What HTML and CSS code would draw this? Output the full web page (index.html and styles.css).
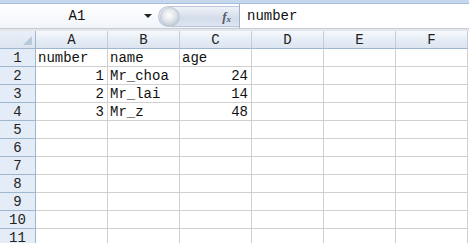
FILE: index.html
```html
<!DOCTYPE html>
<html>
<head>
	<link rel="stylesheet" href="styles.css">
</head>
<body>
<div class="strip"></div>
<div class="fbar">
	<div class="namebox"><span class="ref">A1</span><span class="arrow"></span></div>
	<div class="fxbtn"><span class="knob"></span><span class="fx">f<sub>x</sub></span></div>
	<div class="input">number</div>
</div>
<div class="gap"></div>
<div class="sheet">
	<div class="corner"><span class="tri"></span></div>
	<div class="colhead">A</div>
	<div class="colhead">B</div>
	<div class="colhead">C</div>
	<div class="colhead">D</div>
	<div class="colhead">E</div>
	<div class="colhead">F</div>

	<div class="rowhead">1</div>
	<div class="cell">number</div><div class="cell">name</div><div class="cell">age</div><div class="cell"></div><div class="cell"></div><div class="cell"></div>
	<div class="rowhead">2</div>
	<div class="cell num">1</div><div class="cell">Mr_choa</div><div class="cell num">24</div><div class="cell"></div><div class="cell"></div><div class="cell"></div>
	<div class="rowhead">3</div>
	<div class="cell num">2</div><div class="cell">Mr_lai</div><div class="cell num">14</div><div class="cell"></div><div class="cell"></div><div class="cell"></div>
	<div class="rowhead">4</div>
	<div class="cell num">3</div><div class="cell">Mr_z</div><div class="cell num">48</div><div class="cell"></div><div class="cell"></div><div class="cell"></div>
	<div class="rowhead">5</div>
	<div class="cell"></div><div class="cell"></div><div class="cell"></div><div class="cell"></div><div class="cell"></div><div class="cell"></div>
	<div class="rowhead">6</div>
	<div class="cell"></div><div class="cell"></div><div class="cell"></div><div class="cell"></div><div class="cell"></div><div class="cell"></div>
	<div class="rowhead">7</div>
	<div class="cell"></div><div class="cell"></div><div class="cell"></div><div class="cell"></div><div class="cell"></div><div class="cell"></div>
	<div class="rowhead">8</div>
	<div class="cell"></div><div class="cell"></div><div class="cell"></div><div class="cell"></div><div class="cell"></div><div class="cell"></div>
	<div class="rowhead">9</div>
	<div class="cell"></div><div class="cell"></div><div class="cell"></div><div class="cell"></div><div class="cell"></div><div class="cell"></div>
	<div class="rowhead">10</div>
	<div class="cell"></div><div class="cell"></div><div class="cell"></div><div class="cell"></div><div class="cell"></div><div class="cell"></div>
	<div class="rowhead">11</div>
	<div class="cell"></div><div class="cell"></div><div class="cell"></div><div class="cell"></div><div class="cell"></div><div class="cell"></div>
</div>
</body>
</html>
```
FILE: styles.css
```css
html, body {
  margin: 0;
  height: 243px;
  overflow: hidden;
  background: #fff;
  font-family: "Liberation Mono", "DejaVu Sans Mono", monospace;
  font-size: 14px;
  color: #111;
}

.strip {
  height: 3px;
  background: #c6d8ee;
  border-bottom: 1px solid #a9c0dd;
}

.fbar {
  display: flex;
  height: 24px;
  background: linear-gradient(#ffffff, #f1f5fa);
}

.namebox {
  width: 158px;
  display: flex;
  align-items: center;
}

.ref {
  flex: 1;
  text-align: center;
  padding-left: 10px;
}

.arrow {
  width: 0;
  height: 0;
  border-left: 4px solid transparent;
  border-right: 4px solid transparent;
  border-top: 4px solid #222;
  margin-right: 6px;
}

.fxbtn {
  width: 80px;
  margin: 2px 0 1px;
  border-radius: 11px 0 0 11px;
  background: linear-gradient(#eef2f8, #d3dceb 60%, #dde5f0);
  border: 1px solid #b9c7d9;
  border-right: none;
  display: flex;
  align-items: center;
  justify-content: space-between;
}

.knob {
  width: 18px;
  height: 18px;
  border-radius: 50%;
  margin-left: 1px;
  background: radial-gradient(circle at 45% 40%, #ffffff, #dfe4ea 45%, #b8c1cc 80%);
  border: 1px solid #c2ccd8;
}

.fx {
  font-family: "Liberation Serif", serif;
  font-style: italic;
  font-weight: bold;
  font-size: 13px;
  color: #555b66;
  margin-right: 8px;
}

.fx sub {
  font-size: 9px;
  vertical-align: -1px;
}

.input {
  flex: 1;
  background: #fff;
  border-left: 1px solid #9fb3cb;
  padding-left: 7px;
  line-height: 24px;
}

.gap {
  height: 2px;
  background: #e3e7ec;
  border-top: 1px solid #c4ccd6;
}

.sheet {
  display: grid;
  grid-template-columns: 36px repeat(6, 72px);
  grid-auto-rows: 18px;
}

.sheet > div {
  box-sizing: border-box;
  line-height: 18px;
  white-space: nowrap;
  overflow: hidden;
}

.corner {
  background: linear-gradient(#eaf0f8, #dbe4f0);
  border-right: 1px solid #9eb6ce;
  border-bottom: 1px solid #9eb6ce;
  position: relative;
}

.tri {
  position: absolute;
  right: 3px;
  bottom: 3px;
  width: 0;
  height: 0;
  border-left: 9px solid transparent;
  border-bottom: 9px solid #b8c9dd;
}

.colhead {
  text-align: center;
  background: linear-gradient(#f7f9fc, #e5ecf5 55%, #dce5f0);
  border-right: 1px solid #c0cddc;
  border-bottom: 1px solid #9eb6ce;
  color: #222;
}

.rowhead {
  text-align: center;
  background: #e4ecf7;
  border-right: 1px solid #9eb6ce;
  border-bottom: 1px solid #9eb6ce;
  color: #222;
}

.cell {
  border-right: 1px solid #d0d0d0;
  border-bottom: 1px solid #d0d0d0;
  padding: 0 3px 0 2px;
}

.num {
  text-align: right;
}
```
